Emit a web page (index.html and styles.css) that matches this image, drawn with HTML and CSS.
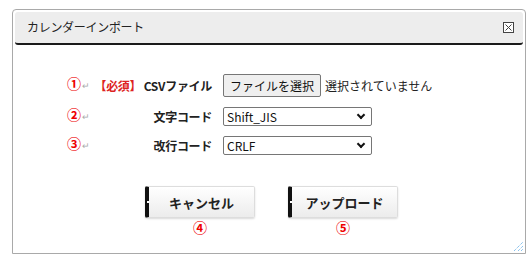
FILE: index.html
```html
<!DOCTYPE html>
<html lang="ja">
<head>
  <meta charset="UTF-8" />
  <title>カレンダーインポート</title>
  <link rel="stylesheet" href="styles.css">
</head>
<body>

  <div class="dialog">
    <div class="dialog-head">
      <span class="dialog-title">カレンダーインポート</span>
      <span class="close-btn">
        <svg width="11" height="11" viewBox="0 0 11 11">
          <rect x="0.5" y="0.5" width="10" height="10" fill="#fff" stroke="#444"/>
          <path d="M2.5 2.5 L8.5 8.5 M8.5 2.5 L2.5 8.5" stroke="#444" stroke-width="1"/>
        </svg>
      </span>
    </div>

    <div class="form">
      <span class="mark">①<i>↵</i></span>
      <label class="label"><span class="req">【必須】</span>&nbsp;CSVファイル</label>
      <div class="control">
        <span class="file-btn">ファイルを選択</span>
        <span class="file-name">選択されていません</span>
      </div>

      <span class="mark">②<i>↵</i></span>
      <label class="label">文字コード</label>
      <div class="control">
        <span class="select">Shift_JIS<b class="chev"></b></span>
      </div>

      <span class="mark">③<i>↵</i></span>
      <label class="label">改行コード</label>
      <div class="control">
        <span class="select">CRLF<b class="chev"></b></span>
      </div>
    </div>

    <div class="actions">
      <div class="action">
        <button class="btn">キャンセル</button>
        <span class="num">④</span>
      </div>
      <div class="action">
        <button class="btn">アップロード</button>
        <span class="num">⑤</span>
      </div>
    </div>

    <svg class="grip" width="11" height="11" viewBox="0 0 11 11">
      <path d="M1 10 L10 1 M5 10 L10 5 M8 10 L10 8" stroke="#5aa9e6" stroke-width="1" stroke-dasharray="1 1"/>
    </svg>
  </div>

</body>
</html>
```

FILE: styles.css
```css
* {
  box-sizing: border-box;
  margin: 0;
  padding: 0;
}

body {
  font-family: 'Noto Sans CJK JP', 'Noto Sans', sans-serif;
  font-size: 12px;
  color: #222;
  background: #fff;
}

.dialog {
  position: relative;
  margin: 9px 0 0 12px;
  width: 514px;
  height: 245px;
  border: 1px solid #a9a9a9;
  border-radius: 4px 4px 0 0;
  padding: 2px;
}

.dialog-head {
  display: flex;
  align-items: center;
  justify-content: space-between;
  height: 33px;
  padding: 0 9px 0 12px;
  background: #ededed;
  border-bottom: 2px solid #1a1a1a;
  border-radius: 3px;
}

.dialog-title {
  font-size: 12px;
  color: #222;
  letter-spacing: -0.3px;
  margin-top: -2px;
}

.close-btn {
  display: flex;
  margin-top: -1px;
}

.form {
  display: grid;
  grid-template-columns: 28px 117px auto;
  grid-template-rows: 23px 19px 19px;
  row-gap: 10px;
  margin: 29px 0 0 52px;
  align-items: center;
}

.mark {
  color: #e00;
  font-size: 14px;
  font-weight: bold;
  line-height: 1;
  margin-top: -5px;
  white-space: nowrap;
}

.mark i {
  font-style: normal;
  font-weight: normal;
  color: #aaa;
  font-size: 9px;
  margin-left: 1px;
}

.label {
  display: flex;
  justify-content: flex-end;
  white-space: nowrap;
  font-weight: bold;
  font-size: 12px;
  letter-spacing: -0.3px;
  color: #222;
}

.req {
  color: #d22;
  font-weight: bold;
}

.control {
  display: flex;
  align-items: center;
  padding-left: 11px;
}

.file-btn {
  display: inline-flex;
  align-items: center;
  height: 23px;
  padding: 0 6px;
  background: #efefef;
  border: 1px solid #767676;
  border-radius: 2px;
  font-size: 12px;
  color: #111;
}

.file-name {
  margin-left: 4px;
  font-size: 12px;
  color: #222;
}

.select {
  position: relative;
  display: flex;
  align-items: center;
  width: 149px;
  height: 19px;
  padding-left: 3px;
  border: 1px solid #767676;
  border-radius: 2px;
  font-size: 12px;
  color: #111;
  background: #fff;
}

.chev {
  position: absolute;
  right: 7px;
  top: 4px;
  width: 6px;
  height: 6px;
  border-right: 2px solid #111;
  border-bottom: 2px solid #111;
  transform: rotate(45deg);
}

.actions {
  display: flex;
  gap: 33px;
  margin: 31px 0 0 130px;
}

.action {
  display: flex;
  flex-direction: column;
  align-items: center;
}

.btn {
  position: relative;
  width: 110px;
  height: 32px;
  font-family: inherit;
  font-size: 13px;
  font-weight: bold;
  color: #222;
  background: linear-gradient(#ffffff, #ececec);
  border: 1px solid #ddd;
  border-left: 4px solid #111;
  border-radius: 2px;
  box-shadow: 0 1px 2px rgba(0,0,0,0.15);
  cursor: pointer;
}

.btn::before {
  content: "";
  position: absolute;
  left: -2px;
  top: 14px;
  width: 2px;
  height: 2px;
  background: #fff;
}

.num {
  color: #e00;
  font-size: 14px;
  font-weight: bold;
  line-height: 1;
  margin-top: 2px;
}

.grip {
  position: absolute;
  right: 1px;
  bottom: 1px;
}
```
